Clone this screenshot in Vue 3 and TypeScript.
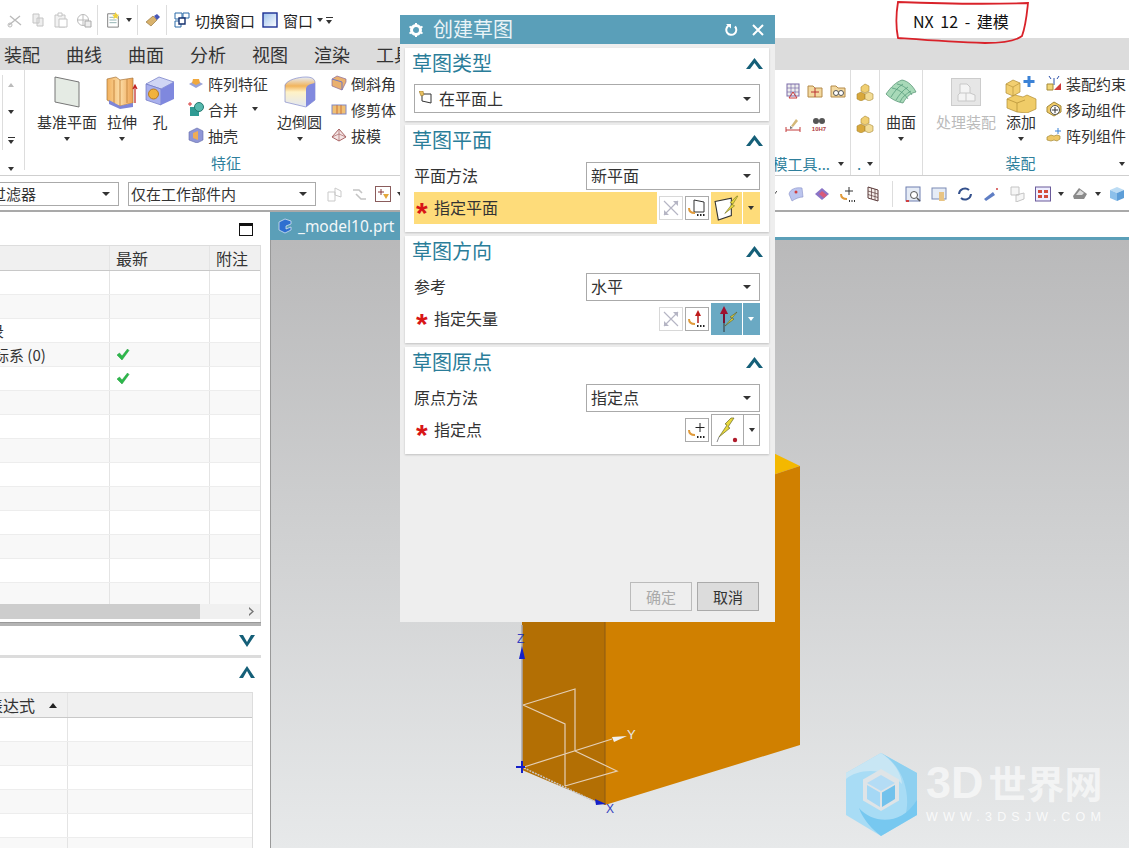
<script setup lang="ts">
const tabs = ['装配', '曲线', '曲面', '分析', '视图', '渲染', '工具']

const navRows = [
  { name: '', clip: 0, ok: false },
  { name: '', clip: 0, ok: false },
  { name: '录', clip: 11, ok: false },
  { name: '标系 (0)', clip: 6, ok: true },
  { name: '', clip: 0, ok: true },
  ...Array.from({ length: 9 }, () => ({ name: '', clip: 0, ok: false })),
]
const exprRows = [1, 2, 3, 4, 5, 6]
</script>

<template>
  <div class="app">
    <header class="titlebar">
      <svg class="ic" viewBox="0 0 16 16"><path d="M2 13 13 4M3 4l11 9" stroke="#bbb" fill="none" stroke-width="1.4"/><circle cx="3" cy="13" r="2" fill="none" stroke="#bbb"/></svg>
      <svg class="ic" viewBox="0 0 16 16"><path d="M3 2h6v9H3zM7 6h6v8H7z" fill="#eee" stroke="#c4c4c4"/></svg>
      <svg class="ic" viewBox="0 0 16 16"><path d="M2 3h10v12H2z" fill="#f2f2f2" stroke="#c4c4c4"/><path d="M5 1h4v3H5zM6 7h8v8H6z" fill="#fff" stroke="#c4c4c4"/></svg>
      <svg class="ic" viewBox="0 0 16 16"><circle cx="7" cy="8" r="5.5" fill="none" stroke="#bbb"/><path d="M1 8h12M7 2v12" stroke="#bbb"/><path d="M9 9h6v6H9z" fill="#eee" stroke="#aaa"/></svg>
      <i class="vline"></i>
      <svg class="ic" viewBox="0 0 16 18"><path d="M2 2h9l3 3v12H2z" fill="#fff" stroke="#777"/><path d="M4 6h5M4 9h8M4 12h8" stroke="#8aa"/><path d="m11 0 1.3 2.7L15 3l-2 2 .5 3-2.500-1.500L8.500 8l.5-3-2-2 2.700-.3z" fill="#f0d23c"/></svg>
      <i class="tri tri-s"></i>
      <i class="vline"></i>
      <svg class="ic" viewBox="0 0 16 16"><path d="m1 10 7-6 4 4-6 6z" fill="#d9b26c" stroke="#8a6a30" stroke-width=".6"/><path d="m9 4 3-2 3 3-3 3z" fill="#4757b5"/></svg>
      <i class="vline"></i>
      <svg class="ic" viewBox="0 0 16 16"><path d="M1 1h7v6H1zM9 1h6v5H9zM1 9h6v6H1z" fill="#fff" stroke="#2a6aa8"/><path d="M5 6h6v6H5z" fill="#fff" stroke="#14306e" stroke-width="1.4"/></svg>
      <span class="tb-text switch">切换窗口</span>
      <svg class="ic" viewBox="0 0 16 16"><defs><linearGradient id="win" x1="0" y1="0" x2="1" y2="1"><stop offset="0" stop-color="#9cc1ec"/><stop offset="1" stop-color="#fff"/></linearGradient></defs><rect x="1" y="1" width="14" height="14" fill="url(#win)" stroke="#1c2f94" stroke-width="1.4"/></svg>
      <span class="tb-text win">窗口</span>
      <i class="tri tri-s win-caret"></i>
      <i class="more top-more"></i>
      <span class="app-name">NX 12 - 建模</span>
    </header>

    <nav class="menu">
      <span v-for="t in tabs" :key="t">{{ t }}</span>
    </nav>

    <section class="ribbon">
      <div class="scroller">
        <i class="tri up"></i>
        <i class="tri"></i>
        <i class="more"></i>
        <i class="tri"></i>
      </div>

      <div class="group features">
        <div class="tools">
          <div class="big w60">
            <svg width="26" height="32" viewBox="0 0 26 32"><path d="M1 1 25 6v25L1 26z" fill="#e5ebe4" stroke="#777"/></svg>
            <span>基准平面</span><i class="tri"></i>
          </div>
          <div class="big w30">
            <svg width="32" height="34" viewBox="0 0 32 34"><defs><linearGradient id="ext" x1="0" y1="0" x2="1" y2="0"><stop offset="0" stop-color="#f2b05c"/><stop offset=".5" stop-color="#fbdca6"/><stop offset="1" stop-color="#eea04e"/></linearGradient></defs><path d="M1 3 10 1l4 3 13-2v25l-13 3-4-1-9-5z" fill="url(#ext)" stroke="#a8763c" stroke-width=".7"/><path d="M8 4v25M14 4v26M21 3v24" stroke="#c98a42" fill="none"/><path d="M3 24 14 30l13-3v4l-13 2L3 28z" fill="#7e86d8"/><path d="M29 27V10m-2 3 2-4 2 4" stroke="#c02020" fill="none" stroke-width="1.2"/></svg>
            <span>拉伸</span><i class="tri"></i>
          </div>
          <div class="big w30">
            <svg width="30" height="30" viewBox="0 0 30 30"><path d="M1 8 14 1l15 5-13 7z" fill="#cfd5f4" stroke="#6f77c4" stroke-width=".7"/><path d="M1 8v16l15 5V13z" fill="#a9b0ec" stroke="#6f77c4" stroke-width=".7"/><path d="M16 13v16l13-6V6z" fill="#7f88de"/><circle cx="8.500" cy="18" r="5" fill="#f0b23c" stroke="#b57a22"/></svg>
            <span>孔</span>
          </div>
          <div class="small-col w80">
            <div class="small"><svg class="ic" viewBox="0 0 16 16"><path d="M1 9 8 5l7 4-7 4z" fill="#9aa4d8"/><path d="M5 4h6l1 4-4 2-4-2z" fill="#f0a83e"/></svg><span>阵列特征</span></div>
            <div class="small"><svg class="ic" viewBox="0 0 16 16"><rect x="2" y="6" width="9" height="9" fill="#2f9b94"/><circle cx="11" cy="6" r="4.500" fill="#57b9ae" stroke="#24796f"/><path d="M0 3h4M2 1v4" stroke="#d43b3b"/></svg><span>合并</span><i class="tri tri-after"></i></div>
            <div class="small"><svg class="ic" viewBox="0 0 16 16"><path d="M1 5 9 1l6 3v9l-6 3-8-3z" fill="#8f96d6" stroke="#616aa8" stroke-width=".6"/><path d="M5 6 10 4v9L5 11z" fill="#f0ad55"/></svg><span>抽壳</span></div>
          </div>
          <div class="big w45">
            <svg width="32" height="32" viewBox="0 0 32 32"><defs><linearGradient id="fil" x1="0" y1="0" x2="0" y2="1"><stop offset="0" stop-color="#e5edf8"/><stop offset=".3" stop-color="#f2b45c"/><stop offset=".5" stop-color="#fff2c6"/><stop offset="1" stop-color="#e1e7f4"/></linearGradient></defs><path d="M1 9C3 4 14 1 22 1c6 0 9 2 9 6v17l-9 7L1 26z" fill="url(#fil)" stroke="#7078c2" stroke-width=".6"/><path d="M22 31V13c0-3 3-5 9-6v17z" fill="#8189de"/></svg>
            <span>边倒圆</span><i class="tri"></i>
          </div>
          <div class="small-col w65">
            <div class="small"><svg class="ic" viewBox="0 0 16 16"><path d="M1 4 6 1l9 3v3l-4 8-10-4z" fill="#eab06e" stroke="#8b6a9a" stroke-width=".7"/><path d="m1 4 10 3v8" fill="none" stroke="#7078c2"/></svg><span>倒斜角</span></div>
            <div class="small"><svg class="ic" viewBox="0 0 16 16"><rect x="1" y="4" width="14" height="9" fill="#f0c074" stroke="#8089c8"/><path d="M6 4v9M10 4v9" stroke="#c9723c"/></svg><span>修剪体</span></div>
            <div class="small"><svg class="ic" viewBox="0 0 16 16"><path d="M8 2 15 10 8 14 1 10z" fill="#f3e4e4" stroke="#a66"/><path d="M8 2v12M1 10l7-3 7 3" fill="none" stroke="#a66" stroke-width=".7"/></svg><span>拔模</span></div>
          </div>
        </div>
        <div class="group-name">特征</div>
      </div>

      <div class="group mold">
        <div class="tools mold-tools">
          <div class="mold-grid">
            <svg class="ic" viewBox="0 0 16 16"><rect x="2" y="1" width="12" height="12" fill="#eee" stroke="#7a6aa8"/><path d="M2 5h12M2 9h12M6 1v12M10 1v12" stroke="#7a6aa8" stroke-width=".7"/><path d="m8 9 4 6H4z" fill="none" stroke="#cc3a3a"/></svg>
            <svg class="ic" viewBox="0 0 16 16"><path d="M1 3h5l2 2h7v9H1z" fill="#f3d9a0" stroke="#b48a48"/><path d="M8 5v9M4 9h8" stroke="#b33"/></svg>
            <svg class="ic" viewBox="0 0 16 16"><path d="M1 3h5l2 2h7v9H1z" fill="#f3d9a0" stroke="#b48a48"/><circle cx="6" cy="10" r="2.500" fill="#fff" stroke="#555"/><circle cx="11" cy="10" r="2.500" fill="#fff" stroke="#555"/></svg>
            <svg class="ic" viewBox="0 0 16 16"><path d="m6 9 5-7 2 2-5 6z" fill="#d4b878"/><path d="M1 10v5M15 10v5M1 13h14" stroke="#c43c3c"/><path d="m5 9 3 2-3 1z" fill="#777"/></svg>
            <svg class="ic wide" viewBox="0 0 16 16"><circle cx="5" cy="4" r="3" fill="#555"/><circle cx="11" cy="4" r="3" fill="#555"/><text x="8" y="14" text-anchor="middle" class="tiny">10H7</text></svg>
          </div>
        </div>
        <div class="group-name mold-name"><span>建模工具...</span><i class="tri tri-s"></i></div>
      </div>

      <div class="group gems">
        <div class="tools gem-col">
          <svg class="ic gem" viewBox="0 0 18 18"><path d="m5 4 4-3 4 2v5l-4 2-4-2z" fill="#f0cf72" stroke="#a88632" stroke-width=".6"/><path d="m1 11 4-2 4 2v5l-4 2-4-2z" fill="#d8a83c" stroke="#a88632" stroke-width=".6"/><path d="m9 11 4-2 4 2v5l-4 2-4-2z" fill="#f2dc96" stroke="#a88632" stroke-width=".6"/></svg>
          <svg class="ic gem" viewBox="0 0 18 18"><path d="m5 4 4-3 4 2v5l-4 2-4-2z" fill="#f0cf72" stroke="#a88632" stroke-width=".6"/><path d="m1 11 4-2 4 2v5l-4 2-4-2z" fill="#d8a83c" stroke="#a88632" stroke-width=".6"/><path d="m9 11 4-2 4 2v5l-4 2-4-2z" fill="#f2dc96" stroke="#a88632" stroke-width=".6"/></svg>
        </div>
        <div class="group-name"><span class="dots">.</span><i class="tri tri-s"></i></div>
      </div>

      <div class="group surface">
        <div class="tools">
          <div class="big w36">
            <svg class="sheet" width="32" height="25" viewBox="0 0 32 25"><path d="M1 15C6 8 11 3 17 1c6 1 11 6 14 12-5 1-9 4-13 11-6-1-12-4-17-9z" fill="#a8d9b8" stroke="#4c8c6c" stroke-width=".7"/><path d="M7 9c6 1 12 5 16 11M12 5c6 1 11 5 15 11M6 18c3-5 7-10 12-13M11 21c3-5 7-10 12-13M15 23c2-5 6-8 11-11" fill="none" stroke="#4c9474" stroke-width=".7"/></svg>
            <span>曲面</span><i class="tri"></i>
          </div>
        </div>
      </div>

      <div class="group assembly">
        <div class="tools">
          <div class="big w60 muted">
            <svg class="proc" width="30" height="28" viewBox="0 0 30 28"><rect x=".5" y=".5" width="29" height="27" fill="#e6e6e6" stroke="#ccc"/><path d="M9 6h7l3 3v6l5 2v6H7v-6l2-2z" fill="#f4f4f4" stroke="#c8c8c8"/><path d="M9 15h10M15 15v8" stroke="#c8c8c8"/></svg>
            <span>处理装配</span>
          </div>
          <div class="big w30 add">
            <svg width="32" height="38" viewBox="0 0 32 38"><path d="M1 9 8 5l7 3v9l-7 4-7-3z" fill="#f2cf70" stroke="#b08c34" stroke-width=".7"/><path d="M1 9l7 3v9M8 12l7-4" fill="none" stroke="#b08c34" stroke-width=".6"/><path d="M2 24 10 20l8 2 4-2 9 4v10l-9 4-10-1-10-4z" fill="#f0cc68" stroke="#b08c34" stroke-width=".7"/><path d="M2 24l10 4v9M12 28l8-3" fill="none" stroke="#b08c34" stroke-width=".7"/><path d="M24 1v11M18.500 6.500h11" stroke="#3b82d6" stroke-width="3"/></svg>
            <span>添加</span><i class="tri"></i>
          </div>
          <div class="small-col w80 last">
            <div class="small"><svg class="ic" viewBox="0 0 16 16"><path d="M3 1l2 3M13 1l-2 3M8 3v7" stroke="#2a4ea8" fill="none"/><path d="M1 9h6v6H1z" fill="#f2d778" stroke="#a58a38"/><path d="m8 15 7-7v7z" fill="#d23c3c"/></svg><span>装配约束</span></div>
            <div class="small"><svg class="ic" viewBox="0 0 16 16"><path d="M1 6 8 1l7 4v6l-7 4-7-4z" fill="#efca68" stroke="#a58a38"/><circle cx="9" cy="9" r="4.500" fill="#fff" stroke="#555"/><path d="M9 6v6M6 9h6" stroke="#333"/></svg><span>移动组件</span></div>
            <div class="small"><svg class="ic" viewBox="0 0 16 16"><path d="M1 10 5 8l3 1 3-1 3 1v3l-3 2-3-1-3 1-4-1z" fill="#eec868" stroke="#a58a38" stroke-width=".7"/><path d="M12 1v6M9 4h6" stroke="#3b82d6"/></svg><span>阵列组件</span></div>
          </div>
        </div>
        <div class="group-name asm-name">装配<i class="tri tri-s end"></i></div>
      </div>
    </section>

    <section class="selbar">
      <div class="combo filter"><span>类型过滤器</span></div>
      <div class="combo scope"><span>仅在工作部件内</span></div>
      <div class="sel-left">
        <svg class="ic" viewBox="0 0 16 16"><path d="M1 6h7v9H1zM8 2l6 3v6l-6-2z" fill="none" stroke="#c9c9c9"/></svg>
        <svg class="ic" viewBox="0 0 16 16"><path d="M2 4h6l3 3M5 8l5 5h5" fill="none" stroke="#c4c4c4" stroke-width="1.600"/></svg>
        <svg class="ic" viewBox="0 0 16 16"><rect x=".5" y=".5" width="15" height="15" fill="#fff" stroke="#8a5c5c"/><path d="M6 3v6M3 6h6" stroke="#8a3a3a"/><path d="m8 8h6l-3 5z" fill="#e4a83c"/></svg>
        <i class="tri tri-s"></i>
      </div>
      <div class="sel-right">
        <svg class="ic thin" viewBox="0 0 8 16"><path d="M0 15 8 5" stroke="#444"/></svg>
        <svg class="ic" viewBox="0 0 16 16"><path d="M1 8C2 3 8 1 14 2l1 9c-4 0-8 2-11 4z" fill="#bcc5ee" stroke="#8890c8" stroke-width=".6"/><circle cx="8" cy="6" r="1.500" fill="#d04040"/></svg>
        <svg class="ic" viewBox="0 0 16 16"><path d="M1 8 8 2l7 6-7 6z" fill="#8a74c6"/><path d="M5 8 8 5l5 4-3 3z" fill="#d85a7a"/></svg>
        <svg class="ic" viewBox="0 0 16 16"><path d="M9 1v8M5 5h8" stroke="#333"/><path d="M1 8c0 4 2 5 6 5" fill="none" stroke="#e09a3a" stroke-width="2"/><path d="M9 15h1M11.500 15h1M14 15h1" stroke="#333" stroke-width="2"/></svg>
        <svg class="ic slim" viewBox="0 0 14 16"><path d="M2 1l10 3v11L2 12z" fill="#f5eeea" stroke="#5a3a3a"/><path d="M2 5l10 3M2 8.500l10 3M5.500 2v11M9 3v11" stroke="#5a3a3a" stroke-width=".7"/></svg>
        <i class="vline sep"></i>
        <svg class="ic" viewBox="0 0 16 16"><rect x="1" y="1" width="14" height="14" fill="#e6ecf6" stroke="#6f7fb0"/><circle cx="9" cy="9" r="3.500" fill="#fff" stroke="#555"/><path d="m12 12 3 3" stroke="#555" stroke-width="1.500"/><path d="M1 15h3" stroke="#d04040" stroke-width="2"/></svg>
        <svg class="ic" viewBox="0 0 16 16"><rect x="1" y="2" width="14" height="11" fill="#e6ecf6" stroke="#7a8ab4"/><path d="M8 6h5v7l1 2H8z" fill="#e8c484"/></svg>
        <svg class="ic" viewBox="0 0 16 16"><path d="M2 8a6 6 0 0 1 10-4M14 8a6 6 0 0 1-10 4" fill="none" stroke="#33508c" stroke-width="2"/></svg>
        <svg class="ic" viewBox="0 0 16 16"><path d="M1 13 10 6l2 3-9 6z" fill="#5f7ec4"/><circle cx="14" cy="3" r="1" fill="#d04040"/></svg>
        <svg class="ic" viewBox="0 0 16 16"><path d="M2 1h8v8H2zM7 9l8-2v6l-8 3z" fill="#f6f6f6" stroke="#c4c4c4"/></svg>
        <svg class="ic" viewBox="0 0 16 16"><rect x=".5" y="1" width="15" height="14" fill="#eef" stroke="#6a5a9a"/><path d="M3 4h4v3H3zM9 4h4v3H9zM3 9h4v3H3zM9 9h4v3H9z" fill="#d24a3a"/></svg>
        <i class="tri tri-s"></i>
        <svg class="ic" viewBox="0 0 16 16"><path d="M1 10 7 2l8 6-3 5H2z" fill="#8a8a8a"/><path d="M4 9 8 4l4 3-2 2z" fill="#ddd"/></svg>
        <i class="tri tri-s"></i>
        <svg class="ic" viewBox="0 0 16 16"><path d="M1 4 8 1l7 3-7 3z" fill="#bcdcf4"/><path d="M1 4v8l7 3V7z" fill="#8cc0ea"/><path d="M15 4v8l-7 3V7z" fill="#5d9ed8"/></svg>
      </div>
    </section>

    <main class="workspace">
      <aside class="side">
        <div class="nav">
          <div class="nav-top">
            <span class="maxi"></span>
          </div>
          <div class="tbl">
            <div class="tr th">
              <div class="td c1"></div>
              <div class="td c2">最新</div>
              <div class="td c3">附注</div>
            </div>
            <div class="tbody">
              <div v-for="(r, i) in navRows" :key="i" class="tr">
                <div class="td c1"><span class="clip" :style="{ marginLeft: -r.clip + 'px' }">{{ r.name }}</span></div>
                <div class="td c2">
                  <svg v-if="r.ok" class="check" width="14" height="13" viewBox="0 0 14 13"><path d="M1 7 3.500 5 6 8 11.500 1 13 2.500 6 12z" fill="#2cb84a" stroke="#1f9a3a" stroke-width=".5"/></svg>
                </div>
                <div class="td c3"></div>
              </div>
            </div>
            <div class="hscroll">
              <div class="thumb"></div>
              <svg width="7" height="9" viewBox="0 0 7 9"><path d="m1 0 5 4.500L1 9V7l3-2.500L1 2z" fill="#777"/></svg>
            </div>
          </div>
          <div class="band"></div>
          <div class="fold">
            <svg class="chev" width="18" height="13" viewBox="0 0 18 13"><path d="M1 1h4l4 7 4-7h4l-8 12z" fill="#155f78"/></svg>
          </div>
          <div class="band light"></div>
          <div class="fold expr">
            <svg class="chev" width="18" height="12" viewBox="0 0 18 12"><path d="M1 12h4l4-7 4 7h4L9 0z" fill="#155f78"/></svg>
          </div>
          <div class="tbl2">
            <div class="tr th">
              <div class="td e1"><span class="clip expr-name">表达式</span><i class="sort"></i></div>
              <div class="td e2"></div>
            </div>
            <div v-for="n in exprRows" :key="n" class="tr">
              <div class="td e1"></div>
              <div class="td e2"></div>
            </div>
          </div>
        </div>
      </aside>

      <div class="viewport">
        <div class="tabstrip">
          <div class="tab">
            <svg width="14" height="16" viewBox="0 0 14 16"><path d="M1 4 7 1l6 2v3L8 8v3l5-2v3l-6 3-6-3z" fill="#2e6fd0" stroke="#e4edf8" stroke-width=".7"/></svg>
            <span>_model10.prt</span>
          </div>
        </div>
        <div class="canvas">
          <svg class="scene" viewBox="271 240 858 608">
            <path d="M522 500 720 427 800 466 605 530Z" fill="#f4b800"/>
            <path d="M605 530 800 466V745L605 805Z" fill="#d08000"/>
            <path d="M522 500 605 530V805L522 770Z" fill="#b36f04"/>
            <path d="M605 530V805" stroke="#8a5a14" stroke-width="1"/>
            <path d="M522 625V767" stroke="#a8a8b0" stroke-width="1.500"/>
            <path d="M523 705 575 689V751M523 705 565 724V786M524 767 612 739M575 751 617 771 565 786" fill="none" stroke="#e4cfb6" stroke-width="1.200"/>
            <path d="M524 768 598 803" stroke="#c8c8cc" stroke-width="1.500" stroke-dasharray="2 1"/>
            <path d="M522 646 525 659H519Z" fill="#1420c8"/>
            <path d="M516 767H525M522 761V773" stroke="#1420c8" stroke-width="2"/>
            <path d="M595 799 606 804 596 805Z" fill="#1420c8"/>
            <path d="M612 737 627 736 614 742Z" fill="#f0f0f0"/>
            <text x="517" y="643" class="axis z">Z</text>
            <text x="627" y="739" class="axis y">Y</text>
            <text x="606" y="813" class="axis x">X</text>
          </svg>
          <div class="watermark">
            <svg width="74" height="86" viewBox="0 0 74 86">
              <path d="M36 1 72 21V63L36 84 1 63V21Z" fill="#a8dcf5"/>
              <path d="M36 1 72 21V55C70 58 66 62 60 65 66 45 60 15 36 1Z" fill="#8ed0f0"/>
              <path d="M36 1 1 21V27C12 17 40 14 57 32 56 20 48 9 36 1Z" fill="#c8e6f4"/>
              <path d="M72 48V63L36 84C28 78 18 68 14 56 28 72 56 74 72 48Z" fill="#77c8f0"/>
              <path d="M36 17 54 27.500V48.500L36 59 18 48.500V27.500Z" fill="#dfe4e7"/>
              <path d="M36 23 50 31 36 39 22 31Z" fill="#b4dcf5"/>
              <path d="M22 33 35 40.500V55L22 47Z" fill="#a5d8f5"/>
              <path d="M50 33 37 40.500V55L50 47Z" fill="#72c2ec"/>
            </svg>
            <div class="wm-text">
              <div class="wm-big"><span class="wm-3d">3D</span>世界网</div>
              <div class="wm-url">WWW.3DSJW.COM</div>
            </div>
          </div>
        </div>
      </div>
    </main>

    <div class="dialog">
      <div class="dlg-head">
        <svg width="16" height="16" viewBox="0 0 16 16"><circle cx="8" cy="8" r="4.500" fill="none" stroke="#fff" stroke-width="3"/><path d="M8 1v3M8 12v3M1.500 4.500 4 6M12 10l2.500 1.500M1.500 11.500 4 10M12 6l2.500-1.500" stroke="#fff" stroke-width="2"/></svg>
        <span class="dlg-title">创建草图</span>
        <svg class="reset" width="13" height="13" viewBox="0 0 13 13"><path d="M10 3.500a5 5 0 1 1-6.500-.8" fill="none" stroke="#fff" stroke-width="2"/><path d="M1 1h5v4.500z" fill="#fff"/></svg>
        <svg width="12" height="12" viewBox="0 0 12 12"><path d="m1 1 10 10M11 1 1 11" stroke="#fff" stroke-width="2"/></svg>
      </div>

      <div class="dlg-body">
        <div class="card">
          <div class="card-head"><span>草图类型</span><svg width="17" height="11" viewBox="0 0 17 11"><path d="M0 11h4l4.500-6L13 11h4L8.500 0z" fill="#155f78"/></svg></div>
          <div class="select">
            <svg class="opt-ic" width="14" height="14" viewBox="0 0 14 14"><path d="M3 3h9v9l-9-2z" fill="#fff" stroke="#333"/><path d="M0 0h4l1 4-3 1z" fill="#e8c060" stroke="#8a6a20" stroke-width=".5"/></svg>
            <span>在平面上</span>
          </div>
        </div>

        <div class="card">
          <div class="card-head"><span>草图平面</span><svg width="17" height="11" viewBox="0 0 17 11"><path d="M0 11h4l4.500-6L13 11h4L8.500 0z" fill="#155f78"/></svg></div>
          <div class="row-pick">
            <label>平面方法</label>
            <div class="select narrow"><span>新平面</span></div>
          </div>
          <div class="row-spec">
            <div class="req-label active"><b>*</b><span>指定平面</span></div>
            <button class="mini off">
              <svg width="18" height="18" viewBox="0 0 18 18"><path d="M2 2 16 16M16 2 2 16" stroke="#b5b5c4" stroke-width="1.200"/><path d="m11 2 5 0 0 5zM2 11l0 5 5 0z" fill="#b5b5c4"/></svg>
            </button>
            <button class="mini">
              <svg width="20" height="20" viewBox="0 0 20 20"><path d="M7 2 17 4v10H7z" fill="#fff" stroke="#333"/><path d="M2 10c0 4 2 5 6 5" fill="none" stroke="#e09a3a" stroke-width="2"/><path d="M10 17h1.500M13 17h1.500M16 17h1.500" stroke="#222" stroke-width="2"/></svg>
            </button>
            <div class="split active">
              <button class="bolt">
                <svg width="26" height="26" viewBox="0 0 24 24"><path d="M1 6 16 3v16L4 23z" fill="#fff" stroke="#333"/><path d="M21 1 15 7l2 1-7 9 9-7-2-1 5-8z" fill="#e8d83c" stroke="#7a7a2a" stroke-width=".6"/></svg>
              </button>
              <i class="tri"></i>
            </div>
          </div>
        </div>

        <div class="card">
          <div class="card-head"><span>草图方向</span><svg width="17" height="11" viewBox="0 0 17 11"><path d="M0 11h4l4.500-6L13 11h4L8.500 0z" fill="#155f78"/></svg></div>
          <div class="row-pick">
            <label>参考</label>
            <div class="select narrow"><span>水平</span></div>
          </div>
          <div class="row-spec">
            <div class="req-label"><b>*</b><span>指定矢量</span></div>
            <button class="mini off">
              <svg width="18" height="18" viewBox="0 0 18 18"><path d="M2 2 16 16M16 2 2 16" stroke="#b5b5c4" stroke-width="1.200"/><path d="m11 2 5 0 0 5zM2 11l0 5 5 0z" fill="#b5b5c4"/></svg>
            </button>
            <button class="mini">
              <svg width="20" height="20" viewBox="0 0 20 20"><path d="M11 14V5" stroke="#b01c1c" stroke-width="1.500"/><path d="m11 1 3 6H8z" fill="#c01c1c"/><path d="M2 10c0 4 2 5 6 5" fill="none" stroke="#e09a3a" stroke-width="2"/><path d="M10 17h1.500M13 17h1.500M16 17h1.500" stroke="#222" stroke-width="2"/></svg>
            </button>
            <div class="split blue">
              <button class="bolt">
                <svg width="24" height="28" viewBox="0 0 24 28"><path d="M9 18V7" stroke="#7c1030" stroke-width="2"/><path d="m9 1 4 8H5z" fill="#a01030"/><path d="M9 18V27" stroke="#333"/><path d="M22 7 15 12l2 1-7 8 9-7-2-1 5-6z" fill="#e8d83c" stroke="#5a5a2a" stroke-width=".6"/></svg>
              </button>
              <i class="tri"></i>
            </div>
          </div>
        </div>

        <div class="card">
          <div class="card-head"><span>草图原点</span><svg width="17" height="11" viewBox="0 0 17 11"><path d="M0 11h4l4.500-6L13 11h4L8.500 0z" fill="#155f78"/></svg></div>
          <div class="row-pick">
            <label>原点方法</label>
            <div class="select narrow"><span>指定点</span></div>
          </div>
          <div class="row-spec">
            <div class="req-label"><b>*</b><span>指定点</span></div>
            <button class="mini">
              <svg width="20" height="20" viewBox="0 0 20 20"><path d="M13 3v9M8.500 7.500h9" stroke="#222"/><path d="M2 10c0 4 2 5 6 5" fill="none" stroke="#e09a3a" stroke-width="2"/><path d="M10 17h1.500M13 17h1.500M16 17h1.500" stroke="#222" stroke-width="2"/></svg>
            </button>
            <div class="split plain">
              <button class="bolt">
                <svg width="24" height="26" viewBox="0 0 24 26"><path d="M15 1 9 7l2 1-8 12 11-9-2-1 6-9z" fill="#e8d83c" stroke="#6a6a2a" stroke-width=".7"/><path d="M3 20 1 25" stroke="#888"/><circle cx="19" cy="23" r="2.200" fill="#b01c2c"/></svg>
              </button>
              <i class="tri"></i>
            </div>
          </div>
        </div>
      </div>

      <div class="dlg-foot">
        <button class="action disabled">确定</button>
        <button class="action">取消</button>
      </div>
    </div>

    <svg class="scribble" width="140" height="48" viewBox="893 0 140 48">
      <path d="M898 2C896 14 896 28 898 38 925 40 950 42 985 43 1005 43 1017 40 1022 36 1026 25 1027 12 1028 3 1000 4 950 4 898 2Z" fill="none" stroke="#d9222a" stroke-width="1.800"/>
    </svg>
  </div>
</template>

<style>
html,
body {
  margin: 0;
  background: #fff;
}
</style>

<style scoped>
.app {
  position: relative;
  width: 1129px;
  height: 848px;
  overflow: hidden;
  display: flex;
  flex-direction: column;
  background: #fff;
  color: #333;
  font-family: "Noto Sans CJK SC", "Noto Sans", sans-serif;
  font-size: 15px;
}

svg {
  display: block;
  flex: none;
}

.ic {
  width: 16px;
  height: 16px;
}

.tri {
  display: block;
  flex: none;
  width: 0;
  height: 0;
  border-left: 3.5px solid transparent;
  border-right: 3.5px solid transparent;
  border-top: 4px solid #333;
}

.tri.up {
  border-top: 0;
  border-bottom: 4px solid #bbb;
}

.more {
  display: block;
  flex: none;
  width: 7px;
  height: 7px;
  border-top: 1px solid #333;
  box-sizing: border-box;
}

.more::after {
  content: "";
  display: block;
  margin-top: 2px;
  width: 0;
  height: 0;
  border-left: 3.5px solid transparent;
  border-right: 3.5px solid transparent;
  border-top: 4px solid #333;
}

.vline {
  display: block;
  flex: none;
  width: 1px;
  height: 30px;
  margin-left: -2px;
  background: #ddd;
}

/* top bar */
.titlebar {
  height: 38px;
  flex: none;
  display: flex;
  align-items: center;
  gap: 7px;
  padding: 2px 0 0 7px;
  box-sizing: border-box;
}

.tri-s {
  margin: 0 0 0 -2px;
}

.tb-text {
  font-size: 15px;
  color: #222;
}

.switch {
  margin-left: -2px;
}

.win {
  margin-left: -2px;
}

.win-caret {
  margin-left: -3px;
}

.top-more {
  margin-left: -4px;
}

.app-name {
  margin: 2px 0 0 573px;
  font-size: 16px;
  word-spacing: 3px;
  color: #111;
  white-space: nowrap;
}

.menu {
  height: 32px;
  flex: none;
  display: flex;
  align-items: center;
  gap: 26px;
  padding-left: 4px;
  background: #dcdcdc;
  font-size: 18px;
  color: #333;
}

/* ribbon */
.ribbon {
  height: 106px;
  flex: none;
  display: flex;
  box-sizing: border-box;
  border-bottom: 1px solid #cfcfcf;
}

.scroller {
  width: 25px;
  height: 100px;
  flex: none;
  display: flex;
  flex-direction: column;
  align-items: center;
  padding: 13px 2px 0 0;
  gap: 23px;
  box-sizing: border-box;
  border-right: 1px solid #ddd;
  background: linear-gradient(#ddd, #ddd) 2px 5px / 1px 75px no-repeat;
}

.group {
  flex: none;
  height: 105px;
  display: flex;
  flex-direction: column;
  box-sizing: border-box;
  border-right: 1px solid #ddd;
}

.tools {
  flex: 1;
  min-height: 0;
  display: flex;
}

.group-name {
  height: 22px;
  flex: none;
  text-align: center;
  line-height: 20px;
  font-size: 15px;
  color: #2f7f9c;
}

.features {
  width: 402px;
  border-right: 0;
}

.features .tools {
  padding-left: 12px;
  gap: 9px;
}

.big {
  flex: none;
  display: grid;
  grid-template-rows: 42px 20px 10px;
  justify-items: center;
  white-space: nowrap;
  line-height: 20px;
}

.big > svg {
  margin-top: 6px;
}

.big > .tri {
  margin-top: 5px;
}

.big .sheet {
  margin-top: 9px;
}

.big .proc {
  margin-top: 8px;
}

.add > svg {
  margin-top: 5px;
}

.w60 {
  width: 60px;
}

.w30 {
  width: 30px;
}

.w36 {
  width: 36px;
}

.w45 {
  width: 45px;
}

.small-col {
  flex: none;
  display: flex;
  flex-direction: column;
  margin-left: 4px;
}

.w80 {
  width: 80px;
}

.w65 {
  width: 65px;
}

.small {
  height: 26px;
  display: flex;
  align-items: center;
  gap: 4px;
  white-space: nowrap;
}

.tri-after {
  margin-left: 10px;
}

.features .small-col.w65 {
  margin-left: 0;
}

.mold {
  width: 424px;
}

.mold-tools {
  justify-content: flex-end;
}

.mold-grid {
  width: 65px;
  display: grid;
  grid-template-columns: 22px 23px 20px;
  grid-auto-rows: 34px;
  padding: 13px 0 0;
  align-items: start;
}

.mold-grid .wide {
  grid-column: 2 / 4;
  margin-left: 4px;
}

.tiny {
  font-family: "Liberation Sans", sans-serif;
  font-size: 6px;
  font-weight: 700;
  fill: #b04040;
}

.mold-name {
  display: flex;
  align-items: center;
  justify-content: flex-end;
  gap: 10px;
  padding-right: 6px;
}

.gems {
  width: 29px;
}

.gem-col {
  flex-direction: column;
  align-items: center;
  padding-top: 13px;
  gap: 14px;
}

.gem {
  width: 18px;
  height: 18px;
}

.gems .group-name {
  display: flex;
  align-items: center;
  justify-content: center;
  gap: 8px;
}

.dots {
  color: #2f7f9c;
}

.surface {
  width: 43px;
}

.surface .tools {
  justify-content: center;
}

.assembly {
  width: 205px;
  border-right: 0;
}

.assembly .tools {
  padding-left: 13px;
  gap: 9px;
}

.muted {
  color: #bbb;
}

.small-col.last {
  margin-left: 2px;
}

.asm-name {
  position: relative;
  padding-right: 10px;
}

.end {
  position: absolute;
  right: 3px;
  top: 9px;
}

/* selection bar */
.selbar {
  height: 36px;
  flex: none;
  display: flex;
  align-items: center;
  gap: 9px;
  box-sizing: border-box;
  padding-top: 2px;
  border-bottom: 2px solid #a9a9a9;
}

.combo {
  height: 24px;
  box-sizing: border-box;
  border: 1px solid #aaa;
  display: flex;
  align-items: center;
  position: relative;
  overflow: hidden;
  flex: none;
  padding: 0 0 2px 2px;
}

.combo::after,
.select::after {
  content: "";
  position: absolute;
  right: 8px;
  top: 50%;
  margin-top: -2px;
  border-left: 4px solid transparent;
  border-right: 4px solid transparent;
  border-top: 4px solid #333;
}

.filter {
  width: 121px;
  margin-left: -2px;
}

.filter span {
  margin-left: -40px;
  white-space: nowrap;
}

.scope {
  width: 188px;
}

.sel-left {
  display: flex;
  align-items: center;
  gap: 8px;
  margin-left: 2px;
}

.sel-right {
  margin-left: auto;
  padding-right: 4px;
  display: flex;
  align-items: center;
  gap: 10px;
}

.thin {
  width: 8px;
  margin-right: 1px;
}

.slim {
  width: 14px;
}

.sep {
  height: 26px;
  margin: 0 2px;
}

.sel-right .tri-s {
  margin: 0 -2px 0 -3px;
}

/* lower area */
.workspace {
  flex: 1;
  min-height: 0;
  display: flex;
}

.side {
  width: 270px;
  flex: none;
}

.nav {
  width: 261px;
  height: 100%;
  display: flex;
  flex-direction: column;
}

.nav-top {
  height: 33px;
  flex: none;
  display: flex;
  justify-content: flex-end;
  align-items: center;
  padding: 2px 8px 0 0;
  box-sizing: border-box;
}

.maxi {
  width: 14px;
  height: 13px;
  box-sizing: border-box;
  border: 1px solid #111;
  border-top-width: 3px;
}

.tbl {
  flex: none;
  height: 377px;
  display: flex;
  flex-direction: column;
  box-sizing: border-box;
  border-right: 1px solid #ddd;
  border-top: 1px solid #ddd;
}

.tbody {
  height: 333px;
  flex: none;
  overflow: hidden;
}

.tr {
  display: flex;
  height: 24px;
  box-sizing: border-box;
  border-bottom: 1px solid #ededed;
  background: #fff;
}

.tbody .tr:nth-child(even),
.tbl2 .tr:nth-child(odd) {
  background: #f8f8f8;
}

.tr.th,
.tbl2 .tr.th {
  height: 25px;
  background: #f0f0f0;
  border-bottom: 1px solid #c8c8c8;
  font-size: 16px;
}

.td {
  display: flex;
  align-items: center;
  box-sizing: border-box;
  border-right: 1px solid #e4e4e4;
  white-space: nowrap;
  overflow: hidden;
}

.c1 {
  width: 110px;
  font-size: 15px;
}

.c2 {
  width: 100px;
  padding-left: 6px;
}

.c3 {
  width: 50px;
  padding-left: 6px;
  border-right: 0;
}

.clip {
  display: block;
}

.hscroll {
  height: 15px;
  flex: none;
  display: flex;
  align-items: center;
  background: #f0f0f0;
  padding-right: 5px;
  justify-content: space-between;
}

.thumb {
  width: 200px;
  height: 100%;
  background: #cdcdcd;
}

.band {
  height: 4px;
  flex: none;
  box-sizing: border-box;
  background: #b4b4b4;
  border-top: 1px solid #999;
}

.band.light {
  height: 3px;
  background: #dcdcdc;
  border-top: 0;
}

.fold {
  height: 29px;
  flex: none;
  display: flex;
  align-items: center;
  justify-content: flex-end;
  padding-right: 5px;
  box-sizing: border-box;
}

.fold.expr {
  height: 34px;
  align-items: flex-start;
  padding-top: 8px;
}

.tbl2 {
  width: 253px;
  flex: none;
  box-sizing: border-box;
  border-top: 1px solid #ddd;
  border-right: 1px solid #ddd;
}

.e1 {
  width: 68px;
}

.e2 {
  flex: 1;
  border-right: 0;
}

.expr-name {
  margin-left: -13px;
  color: #333;
}

.sort {
  margin-left: 14px;
  border-left: 4.5px solid transparent;
  border-right: 4.5px solid transparent;
  border-bottom: 5px solid #222;
}

.viewport {
  flex: 1;
  min-width: 0;
  display: flex;
  flex-direction: column;
  border-left: 1px solid #999;
}

.tabstrip {
  height: 28px;
  flex: none;
  box-sizing: border-box;
  border-bottom: 3px solid #5b9fb8;
}

.tab {
  width: 130px;
  height: 28px;
  margin-left: -1px;
  display: flex;
  align-items: center;
  gap: 6px;
  padding-left: 8px;
  box-sizing: border-box;
  background: #5b9fb8;
  color: #f2f7f9;
  font-family: "Noto Sans", sans-serif;
  font-size: 15.5px;
  white-space: nowrap;
  overflow: hidden;
}

.canvas {
  flex: 1;
  position: relative;
  background: linear-gradient(#b9b9ba, #d0d1d2 50%, #e7e9ea);
  overflow: hidden;
}

.scene {
  position: absolute;
  inset: 0;
  width: 858px;
  height: 608px;
}

.axis {
  font-family: "Liberation Sans", sans-serif;
  font-size: 12px;
}

.axis.z,
.axis.x {
  fill: #3240c0;
}

.axis.y {
  fill: #e6e6e6;
  font-size: 13px;
}

.watermark {
  position: absolute;
  left: 574px;
  top: 512px;
  display: flex;
  gap: 7px;
}

.wm-text {
  padding-top: 8px;
  color: rgba(255, 255, 255, 0.6);
  font-weight: 700;
}

.wm-big {
  height: 44px;
  line-height: 44px;
  font-size: 38px;
  white-space: nowrap;
}

.wm-3d {
  margin-right: 5px;
  font-family: "Liberation Sans", sans-serif;
  font-size: 45px;
}

.wm-url {
  margin-top: 6px;
  font-family: "Liberation Sans", sans-serif;
  font-weight: 400;
  font-size: 12.5px;
  letter-spacing: 5.2px;
  white-space: nowrap;
  color: rgba(255, 255, 255, 0.8);
}

/* floating dialog */
.dialog {
  position: absolute;
  left: 400px;
  top: 15px;
  width: 375px;
  height: 607px;
  display: flex;
  flex-direction: column;
  background: #eeeeee;
  color: #333;
}

.dlg-head {
  height: 29px;
  flex: none;
  display: flex;
  align-items: center;
  padding: 0 11px 0 8px;
  background: #5a9fb9;
  color: #fff;
}

.dlg-title {
  margin-left: 9px;
  padding-bottom: 2px;
  font-size: 20px;
  flex: 1;
  color: #eaf4f7;
}

.reset {
  margin-right: 14px;
}

.dlg-body {
  padding: 4px 6px 0 5px;
  display: flex;
  flex-direction: column;
  gap: 4px;
}

.card {
  background: #fff;
  padding: 0 9px 8px;
  box-shadow: 0 1px 2px rgba(0, 0, 0, 0.2);
}

.card-head {
  height: 30px;
  display: flex;
  align-items: center;
  justify-content: space-between;
  font-size: 20px;
  color: #2a7d99;
  margin-left: -2px;
}

.card-head span {
  padding-bottom: 2px;
}

.card-head svg {
  margin-right: -3px;
}

.select {
  position: relative;
  height: 29px;
  margin-top: 6px;
  box-sizing: border-box;
  border: 1px solid #aaa;
  display: flex;
  align-items: center;
  gap: 6px;
  padding: 0 0 2px 4px;
  font-size: 16px;
  background: #fff;
}

.select.narrow {
  width: 174px;
  height: 28px;
  margin-top: 0;
}

.row-pick {
  margin-top: 7px;
  display: flex;
  align-items: center;
  justify-content: space-between;
  font-size: 16px;
}

.row-pick label {
  padding-bottom: 2px;
}

.row-spec {
  margin-top: 2px;
  height: 32px;
  display: flex;
  align-items: center;
  gap: 2px;
}

.req-label {
  flex: 1;
  height: 32px;
  display: flex;
  align-items: center;
  gap: 7px;
  padding: 0 0 2px 2px;
  box-sizing: border-box;
  font-size: 16px;
}

.req-label.active {
  background: #fedc7a;
}

.req-label b {
  position: relative;
  top: 6px;
  width: 11px;
  height: 32px;
  line-height: 32px;
  color: #d81616;
  font-size: 30px;
  font-family: "Liberation Sans", sans-serif;
}

button {
  padding: 0;
  margin: 0;
  font: inherit;
  cursor: pointer;
}

.mini {
  width: 24px;
  height: 24px;
  flex: none;
  display: flex;
  align-items: center;
  justify-content: center;
  background: #fff;
  border: 1px solid #aaa;
}

.mini.off {
  border-color: #d8d8d8;
}

.split {
  width: 49px;
  height: 32px;
  flex: none;
  display: flex;
  align-items: center;
  box-sizing: border-box;
}

.bolt {
  width: 32px;
  height: 100%;
  flex: none;
  display: flex;
  align-items: center;
  justify-content: center;
  background: transparent;
  border: 0;
  border-right: 1px solid #fff;
}

.split .tri {
  margin-left: 5px;
}

.split.active {
  background: #fedc7a;
}

.split.blue {
  background: #6aa9c3;
}

.split.blue .tri {
  border-top-color: #fff;
}

.split.plain {
  border: 1px solid #aaa;
  background: #fff;
}

.split.plain .bolt {
  border-right-color: #aaa;
}

.dlg-foot {
  margin-top: auto;
  padding: 0 16px 11px 0;
  display: flex;
  justify-content: flex-end;
  gap: 5px;
}

.action {
  width: 62px;
  height: 29px;
  box-sizing: border-box;
  background: #dcdcdc;
  border: 1px solid #aaa;
  font-size: 15px;
  color: #333;
}

.action.disabled {
  background: #eeeeee;
  color: #aaa;
  border-color: #bbb;
}

.scribble {
  position: absolute;
  left: 893px;
  top: 0;
}
</style>
